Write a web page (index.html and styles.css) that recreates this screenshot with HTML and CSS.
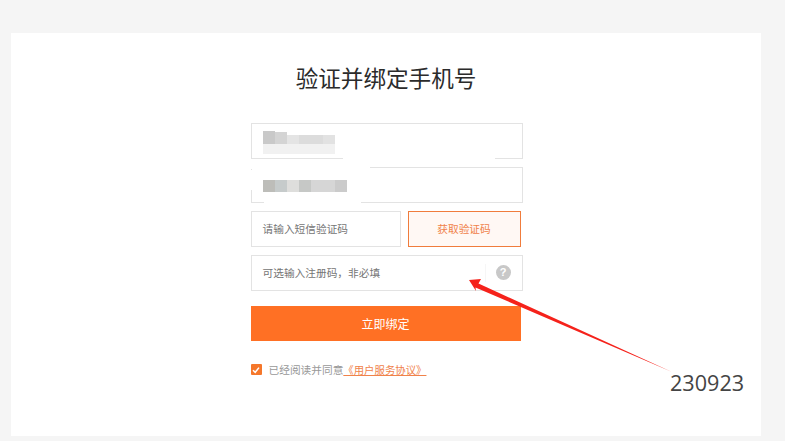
FILE: index.html
```html
<!DOCTYPE html>
<html lang="zh-CN">
<head>
    <meta charset="UTF-8">
    <title>验证并绑定手机号</title>
    <link rel="stylesheet" href="styles.css">
</head>
<body>
    <div class="card">
        <h1 class="title">验证并绑定手机号</h1>
        <div class="form">
            <div class="field">
                <div class="mosaic-top">
                    <div class="mosaic-row">
                        <i class="m1"></i><i class="m2"></i><i class="m3"></i><i class="m4"></i><i class="m5"></i>
                    </div>
                    <div class="mosaic-low"></div>
                </div>
                <!-- 涂抹掉的边框 -->
                <b class="smear smear-a"></b>
            </div>
            <div class="field">
                <div class="mosaic">
                    <i class="m6"></i><i class="m7"></i><i class="m8"></i><i class="m9"></i><i class="m10"></i><i class="m11"></i>
                </div>
                <b class="smear smear-b"></b>
                <b class="smear smear-c"></b>
                <b class="smear smear-d"></b>
            </div>
            <div class="code-row">
                <div class="field code-input">请输入短信验证码</div>
                <div class="code-btn">获取验证码</div>
            </div>
            <div class="field invite">
                <span>可选输入注册码，非必填</span>
                <span class="help-box"><span class="help">?</span></span>
            </div>
            <div class="submit">立即绑定</div>
            <div class="agree">
                <span class="check">
                    <svg width="8" height="8" viewBox="0 0 8 8"><path d="M1 4.2 L3.2 6.3 L7 1.6" fill="none" stroke="#fff" stroke-width="1.5"/></svg>
                </span>
                <span>已经阅读并同意</span><a href="#" class="link">《用户服务协议》</a>
            </div>
        </div>
    </div>

    <!-- 截图上的标注 -->
    <svg class="arrow" width="785" height="441" viewBox="0 0 785 441">
        <path d="M469 280 L481 279 L478.5 283.5 L672 372 L475.5 287.5 L476 291 Z" fill="#f5221b"/>
    </svg>
    <div class="note">230923</div>
</body>
</html>
```

FILE: styles.css
```css
body{
    margin: 0;
    height: 441px;
    overflow: hidden;
    background: #f5f5f5;
    font-family: "Liberation Sans", "Noto Sans CJK SC", sans-serif;
    position: relative;
}
.card{
    margin-left: 11px;
    width: 750px;
    height: 403px;
    position: absolute;
    top: 33px;
    background: #fff;
    display: flex;
    flex-direction: column;
    align-items: center;
}
.title{
    margin: 31px 0 0;
    height: 31px;
    line-height: 31px;
    font-size: 22.6px;
    font-weight: normal;
    color: #2b2b2b;
}
.form{
    width: 272px;
    margin: 28px 0 0 1px;
    display: flex;
    flex-direction: column;
}
.field{
    box-sizing: border-box;
    height: 36px;
    margin-bottom: 8px;
    border: 1px solid #e3e3e3;
    padding: 0 0 2px 11px;
    display: flex;
    align-items: center;
    font-size: 10.7px;
    color: #757575;
    background: #fff;
    position: relative;
}
.mosaic{
    display: flex;
    margin-top: 4px;
}
.mosaic i{
    display: block;
    height: 12px;
}
.mosaic-top{
    display: flex;
    flex-direction: column;
    margin-top: 5px;
}
.mosaic-row{
    display: flex;
    align-items: flex-end;
    height: 13px;
}
.mosaic-row i{
    display: block;
    height: 9px;
}
.mosaic-row .m1{
    height: 13px;
}
.mosaic-row .m2{
    height: 12px;
}
.mosaic-low{
    width: 72px;
    height: 10px;
    background: #f1f1f1;
}
.m1{ width: 12px; background: #c9c9c9; }
.m2{ width: 12px; background: #d4d4d4; }
.m3{ width: 12px; background: #e4e4e4; }
.m4{ width: 24px; background: #dcdcdc; }
.m5{ width: 12px; background: #e2e2e2; }
.m6{ width: 12px; background: #bdbdb9; }
.m7{ width: 12px; background: #c6cbcb; }
.m8{ width: 12px; background: #dededc; }
.m9{ width: 12px; background: #c6c8c6; }
.m10{ width: 24px; background: #d6d6d6; }
.m11{ width: 12px; background: #cbcbcb; }
.smear{
    position: absolute;
    height: 3px;
    background: #fff;
}
.smear-a{
    left: 91px;
    width: 152px;
    bottom: -2px;
}
.smear-b{
    left: -1px;
    width: 119px;
    top: -2px;
}
.smear-c{
    left: 12px;
    width: 97px;
    bottom: -2px;
}
.smear-d{
    left: -1px;
    width: 1px;
    height: 20px;
    top: 2px;
}
.code-row{
    display: flex;
    height: 36px;
    margin-bottom: 8px;
}
.code-input{
    width: 150px;
    margin-bottom: 0;
}
.code-btn{
    box-sizing: border-box;
    width: 113px;
    margin-left: 7px;
    padding-bottom: 2px;
    border: 1px solid #f07c3c;
    background: #fff8f4;
    color: #f0824a;
    font-size: 10.7px;
    display: flex;
    align-items: center;
    justify-content: center;
}
.invite{
    justify-content: space-between;
    margin-bottom: 15px;
    padding-bottom: 1px;
}
.help-box{
    height: 18px;
    padding: 0 11px 0 10px;
    border-left: 1px solid #f6f6f6;
    display: flex;
    align-items: center;
}
.help{
    width: 15px;
    height: 15px;
    border-radius: 50%;
    background: #c8c8c8;
    color: #fff;
    font-size: 11px;
    font-weight: bold;
    line-height: 15px;
    text-align: center;
}
.submit{
    width: 270px;
    height: 35px;
    line-height: 38px;
    background: #ff7024;
    color: #fff;
    font-size: 12px;
    text-align: center;
}
.agree{
    margin-top: 22px;
    display: flex;
    align-items: center;
    font-size: 10.7px;
    color: #999;
    height: 13px;
}
.check{
    width: 11px;
    height: 11px;
    margin-right: 7px;
    border-radius: 1px;
    background: #f5772b;
    display: flex;
    align-items: center;
    justify-content: center;
}
.link{
    color: #f0824a;
    font-size: 10.4px;
    text-decoration: underline;
}
.arrow{
    position: absolute;
    left: 0;
    top: 0;
}
.note{
    position: absolute;
    left: 670px;
    top: 370px;
    font-size: 21.6px;
    line-height: 26px;
    color: #444;
    font-family: "Open Sans", sans-serif;
}
```
